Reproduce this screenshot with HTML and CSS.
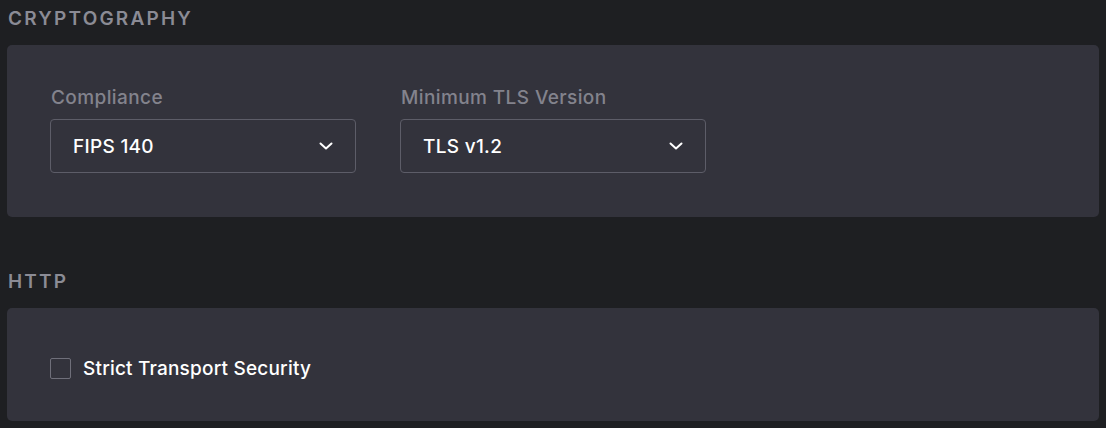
FILE: index.html
```html
<!DOCTYPE html>
<html lang="en">
<head>
<meta charset="utf-8">
<title>Security settings</title>
<link rel="stylesheet" href="styles.css">
</head>
<body>
<div class="page">
  <section class="section">
    <h2 class="section-title">Cryptography</h2>
    <div class="card card-crypto">
      <div class="field">
        <label class="field-label">Compliance</label>
        <div class="select">
          <span class="select-value">FIPS 140</span>
          <svg class="chevron" width="14" height="8" viewBox="0 0 14 8"><path d="M1.5 1.5 L7 6.5 L12.5 1.5" fill="none" stroke="#ffffff" stroke-width="2" stroke-linecap="round" stroke-linejoin="round"/></svg>
        </div>
      </div>
      <div class="field">
        <label class="field-label">Minimum TLS Version</label>
        <div class="select">
          <span class="select-value">TLS v1.2</span>
          <svg class="chevron" width="14" height="8" viewBox="0 0 14 8"><path d="M1.5 1.5 L7 6.5 L12.5 1.5" fill="none" stroke="#ffffff" stroke-width="2" stroke-linecap="round" stroke-linejoin="round"/></svg>
        </div>
      </div>
    </div>
  </section>
  <section class="section section-http">
    <h2 class="section-title">HTTP</h2>
    <div class="card card-http">
      <label class="check">
        <span class="check-box"></span>
        <span class="check-label">Strict Transport Security</span>
      </label>
    </div>
  </section>
</div>
</body>
</html>
```
FILE: styles.css
```css
html, body {
  margin: 0;
  padding: 0;
  background: #1e1f22;
}
body {
  font-family: "Inter", "Lato", sans-serif;
  color: #ffffff;
}
.page {
  padding: 7px 7px 0 7px;
}
.section-title {
  margin: 0 0 0 1px;
  font-size: 19px;
  line-height: 24px;
  font-weight: 600;
  letter-spacing: 2.2px;
  text-transform: uppercase;
  color: #8b8b95;
}
.section-http {
  margin-top: 53px;
}
.card {
  margin-top: 14px;
  background: #33333c;
  border-radius: 5px;
}
.card-crypto {
  display: flex;
  gap: 44px;
  padding: 41px 43px 44px 43px;
}
.field {
  display: flex;
  flex-direction: column;
  gap: 10px;
  width: 306px;
}
.field-label {
  font-size: 19px;
  line-height: 23px;
  font-weight: 500;
  letter-spacing: 0.4px;
  color: #83838d;
  padding-left: 1px;
}
.select {
  box-sizing: border-box;
  height: 54px;
  border: 1px solid #5d5d68;
  border-radius: 4px;
  display: flex;
  align-items: center;
  justify-content: space-between;
  padding: 0 22px 0 22px;
}
.select-value {
  font-size: 19px;
  font-weight: 500;
  letter-spacing: 0.3px;
  color: #ffffff;
}
.chevron {
  display: block;
}
.card-http {
  padding: 49px 43px 42px 43px;
}
.check {
  display: flex;
  align-items: center;
  gap: 12px;
  height: 22px;
}
.check-box {
  box-sizing: border-box;
  width: 21px;
  height: 21px;
  border: 1.5px solid #6f6f7a;
  border-radius: 2px;
}
.check-label {
  font-size: 19px;
  font-weight: 500;
  letter-spacing: 0.2px;
  color: #ffffff;
}
```
